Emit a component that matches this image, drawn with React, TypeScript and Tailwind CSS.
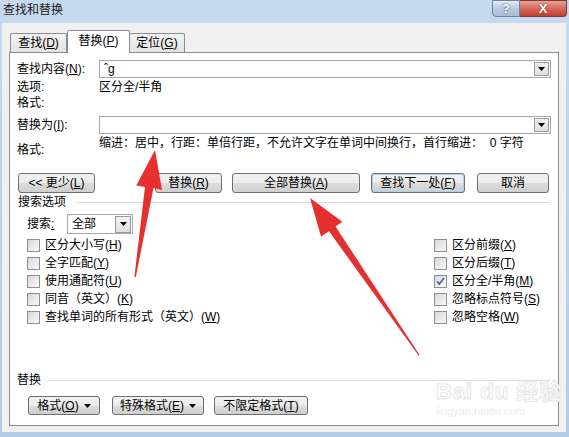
import React from 'react';

const btnBase =
  'flex items-center justify-center rounded-[3px] border border-[#707070] bg-[linear-gradient(#f2f2f2,#ebebeb_50%,#dddddd_50%,#cfcfcf)] text-[12px] leading-none';

function Key({ k }: { k: string }) {
  return (
    <>
      (<span className="underline underline-offset-1">{k}</span>)
    </>
  );
}

function Caret() {
  return (
    <svg width="7" height="4" viewBox="0 0 7 4" className="shrink-0">
      <path d="M0 0h7L3.5 4z" fill="#000" />
    </svg>
  );
}

function DropBtn() {
  return (
    <div className="flex h-[14px] w-[15px] items-center justify-center border border-[#9a9a9a] bg-[linear-gradient(#f4f4f4,#dedede)]">
      <Caret />
    </div>
  );
}

function Check({ label, checked }: { label: React.ReactNode; checked?: boolean }) {
  return (
    <div className="flex h-[18px] items-center gap-[5px]">
      <div className="flex h-[13px] w-[13px] items-center justify-center border border-[#8f8f8f] bg-[linear-gradient(135deg,#d8d8d8,#fafafa)]">
        {checked && (
          <svg width="9" height="9" viewBox="0 0 9 9">
            <path d="M1 4.5l2.3 2.6L8 1" fill="none" stroke="#4a5c8c" strokeWidth="1.6" />
          </svg>
        )}
      </div>
      <span>{label}</span>
    </div>
  );
}

export default function App() {
  return (
    <div className="relative h-[437px] w-[569px] overflow-hidden bg-[linear-gradient(#c6daef,#b4cbe4)] font-['Liberation_Sans','Noto_Sans_CJK_SC',sans-serif] text-[12px] leading-[16px] text-black">
      {/* title bar */}
      <div className="flex h-[23px] items-start justify-between">
        <div className="pl-[3px] pt-[2px] text-[12px] text-[#1b1b1b]">查找和替换</div>
        <div className="mr-[2px] flex">
          <div className="flex h-[17px] w-[28px] items-center justify-center rounded-bl-[4px] border border-[#6c819a] bg-[linear-gradient(#e4ecf5,#b9cbe0_50%,#a9bdd5)] text-[12px] font-bold text-white [text-shadow:0_0_2px_#2b3d55]">
            ?
          </div>
          <div className="flex h-[17px] w-[47px] items-center justify-center rounded-br-[4px] border border-l-0 border-[#7a3b36] bg-[linear-gradient(#e8a497,#d66a5c_50%,#c2402f)] text-[13px] font-bold text-white [text-shadow:0_0_2px_#5a1a14]">
            X
          </div>
        </div>
      </div>

      {/* dialog body */}
      <div className="ml-[2px] mr-[3px] h-[409px] bg-[#f0f0f0] px-[7px] pt-[7px]">
        {/* tabs */}
        <div className="flex h-[22px] items-end pl-[1px]">
          <div className="flex h-[19px] w-[57px] items-center justify-center rounded-t-[2px] border border-b-0 border-[#898c95] bg-[linear-gradient(#f3f3f3,#e3e3e3)]">
            查找<Key k="D" />
          </div>
          <div className="relative z-10 -mb-px flex h-[23px] w-[63px] items-center justify-center rounded-t-[2px] border border-b-0 border-[#898c95] bg-white pb-[2px]">
            替换<Key k="P" />
          </div>
          <div className="flex h-[19px] w-[55px] items-center justify-center rounded-t-[2px] border border-b-0 border-l-0 border-[#898c95] bg-[linear-gradient(#f3f3f3,#e3e3e3)]">
            定位<Key k="G" />
          </div>
        </div>

        {/* panel */}
        <div className="flex h-[374px] flex-col border border-[#898c95] bg-white px-[7px] pb-[10px]">
          <div className="mt-[7px] flex h-[18px] items-center">
            <div className="w-[82px]">
              查找内容<Key k="N" />:
            </div>
            <div className="flex h-full flex-1 items-center justify-between border border-[#a3a8b0] pl-[4px] pr-[1px]">
              <span>ˆg</span>
              <DropBtn />
            </div>
          </div>
          <div className="mt-[1px] flex h-[16px] items-center">
            <div className="w-[82px]">选项:</div>
            <div>区分全/半角</div>
          </div>
          <div className="flex h-[16px] items-center">格式:</div>
          <div className="mt-[5px] flex h-[18px] items-center">
            <div className="w-[82px]">
              替换为<Key k="I" />:
            </div>
            <div className="flex h-full flex-1 items-center justify-end border border-[#a3a8b0] pr-[1px]">
              <DropBtn />
            </div>
          </div>
          <div className="flex h-[24px] items-start">
            <div className="w-[82px] pt-[8px]">格式:</div>
            <div className="pt-[1px]">缩进：居中，行距：单倍行距，不允许文字在单词中间换行，首行缩进： &nbsp;0 字符</div>
          </div>

          {/* main buttons */}
          <div className="mt-[15px] flex h-[20px]">
            <div className={`${btnBase} ml-[1px] w-[77px]`}>
              &lt;&lt; 更少<Key k="L" />
            </div>
            <div className={`${btnBase} ml-[60px] w-[67px]`}>
              替换<Key k="R" />
            </div>
            <div className={`${btnBase} ml-[10px] w-[128px]`}>
              全部替换<Key k="A" />
            </div>
            <div className={`${btnBase} ml-[11px] w-[94px] border-[#3c7fb1] shadow-[inset_0_0_0_1px_#9fd5f3]`}>
              查找下一处<Key k="F" />
            </div>
            <div className={`${btnBase} ml-[12px] w-[72px]`}>取消</div>
          </div>

          {/* search options */}
          <div className="mt-[1px] flex h-[16px] items-center pl-[1px]">
            <span>搜索选项</span>
            <div className="ml-[10px] mr-[1px] h-0 flex-1 border-t border-[#d5dde4]" />
          </div>
          <div className="mt-[4px] flex h-[20px] items-center pl-[10px]">
            <div className="w-[40px]">
              搜索<span className="underline">:</span>
            </div>
            <div className="flex h-full w-[66px] items-center justify-between border border-[#a3a8b0] pl-[4px] pr-[1px]">
              <span>全部</span>
              <div className="flex h-[17px] w-[16px] items-center justify-center border border-[#9a9a9a] bg-[linear-gradient(#f4f4f4,#dedede)]">
                <Caret />
              </div>
            </div>
          </div>
          <div className="mt-[2px] grid grid-cols-[417px_1fr]">
            <div className="pl-[10px]">
              <Check label={<>区分大小写<Key k="H" /></>} />
              <Check label={<>全字匹配<Key k="Y" /></>} />
              <Check label={<>使用通配符<Key k="U" /></>} />
              <Check label={<>同音（英文）<Key k="K" /></>} />
              <Check label={<>查找单词的所有形式（英文）<Key k="W" /></>} />
            </div>
            <div>
              <Check label={<>区分前缀<Key k="X" /></>} />
              <Check label={<>区分后缀<Key k="T" /></>} />
              <Check checked label={<>区分全/半角<Key k="M" /></>} />
              <Check label={<>忽略标点符号<Key k="S" /></>} />
              <Check label={<>忽略空格<Key k="W" /></>} />
            </div>
          </div>

          {/* replace section */}
          <div className="mt-auto flex h-[16px] items-center">
            <span>替换</span>
            <div className="ml-[6px] mr-[1px] h-0 flex-1 border-t border-[#d5dde4]" />
          </div>
          <div className="mt-[8px] flex h-[19px] pl-[11px]">
            <div className={`${btnBase} w-[72px] gap-[5px]`}>
              <span>格式<Key k="O" /></span>
              <Caret />
            </div>
            <div className={`${btnBase} ml-[12px] w-[92px] gap-[5px]`}>
              <span>特殊格式<Key k="E" /></span>
              <Caret />
            </div>
            <div className={`${btnBase} ml-[10px] w-[94px]`}>
              不限定格式<Key k="T" />
            </div>
          </div>
        </div>
      </div>

      {/* baidu watermark */}
      <div className="pointer-events-none absolute left-[436px] top-[381px] flex flex-col items-start leading-none text-white">
        <div className="text-[22px] font-bold tracking-[1px] [-webkit-text-stroke:1px_#e6e6e6]">Bai du 经验</div>
        <div className="mt-[3px] text-[11px] text-[#ededed]">jingyan.baidu.com</div>
      </div>

      {/* red annotation arrows */}
      <svg className="pointer-events-none absolute left-0 top-0" width="569" height="437" viewBox="0 0 569 437">
        <polygon
          points="155,150 162,190 153.5,188 135.8,277 134.4,277 145,187 136.3,185.5"
          fill="#e5302e"
        />
        <polygon
          points="310,198 342.4,221.8 335.5,226.5 419.6,355 418.6,355.6 329,231.3 321,236.6"
          fill="#e5302e"
        />
      </svg>
    </div>
  );
}
